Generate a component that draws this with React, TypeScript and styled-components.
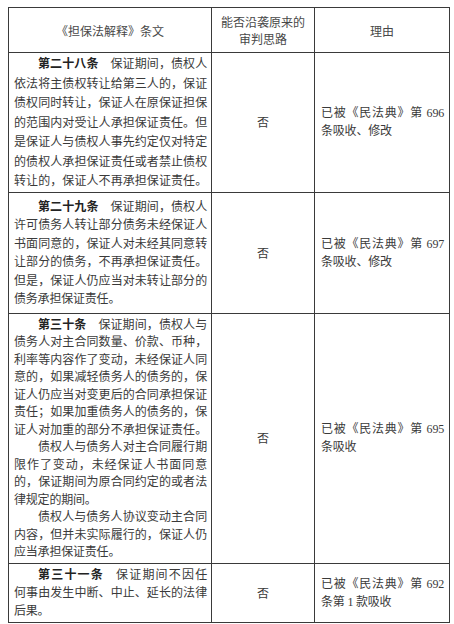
import React from 'react';
import styled, { createGlobalStyle } from 'styled-components';

type Line = {
    text: string;
    title?: string;
    indent?: boolean;
    last?: boolean;
};

type Row = {
    height: number;
    lineHeight: number;
    lines: Line[];
    reason: string[];
};

const rows: Row[] = [
    {
        height: 138,
        lineHeight: 19.5,
        lines: [
            { title: '第二十八条', text: '保证期间，债权人', indent: true },
            { text: '依法将主债权转让给第三人的，保证' },
            { text: '债权同时转让，保证人在原保证担保' },
            { text: '的范围内对受让人承担保证责任。但' },
            { text: '是保证人与债权人事先约定仅对特定' },
            { text: '的债权人承担保证责任或者禁止债权' },
            { text: '转让的，保证人不再承担保证责任。' },
        ],
        reason: ['已被《民法典》第 696', '条吸收、修改'],
    },
    {
        height: 120,
        lineHeight: 18.5,
        lines: [
            { title: '第二十九条', text: '保证期间，债权人', indent: true },
            { text: '许可债务人转让部分债务未经保证人' },
            { text: '书面同意的，保证人对未经其同意转' },
            { text: '让部分的债务，不再承担保证责任。' },
            { text: '但是，保证人仍应当对未转让部分的' },
            { text: '债务承担保证责任。', last: true },
        ],
        reason: ['已被《民法典》第 697', '条吸收、修改'],
    },
    {
        height: 249,
        lineHeight: 17.5,
        lines: [
            { title: '第三十条', text: '保证期间，债权人与', indent: true },
            { text: '债务人对主合同数量、价款、币种，' },
            { text: '利率等内容作了变动，未经保证人同' },
            { text: '意的，如果减轻债务人的债务的，保' },
            { text: '证人仍应当对变更后的合同承担保证' },
            { text: '责任；如果加重债务人的债务的，保' },
            { text: '证人对加重的部分不承担保证责任。' },
            { text: '债权人与债务人对主合同履行期', indent: true },
            { text: '限作了变动，未经保证人书面同意' },
            { text: '的，保证期间为原合同约定的或者法' },
            { text: '律规定的期间。', last: true },
            { text: '债权人与债务人协议变动主合同', indent: true },
            { text: '内容，但并未实际履行的，保证人仍' },
            { text: '应当承担保证责任。', last: true },
        ],
        reason: ['已被《民法典》第 695', '条吸收'],
    },
    {
        height: 58,
        lineHeight: 18,
        lines: [
            { title: '第三十一条', text: '保证期间不因任', indent: true },
            { text: '何事由发生中断、中止、延长的法律' },
            { text: '后果。', last: true },
        ],
        reason: ['已被《民法典》第 692', '条第 1 款吸收'],
    },
];

const GlobalStyle = createGlobalStyle`
    html, body {
        margin: 0;
        padding: 0;
        background: #ffffff;
    }
    body {
        font-family: "Liberation Serif", "Noto Sans CJK SC", serif;
    }
`;

const Page = styled.div`
    box-sizing: border-box;
    width: 454px;
    padding: 7px 0 0 8px;
`;

const Table = styled.table`
    border-collapse: collapse;
    table-layout: fixed;
    width: 438px;
    color: #3a3a3a;
`;

const HeadCell = styled.th<{ $width: number }>`
    width: ${props => props.$width}px;
    height: 44px;
    padding: 0;
    border: 1px solid #3a3a3a;
    color: #484848;
    font-family: "Noto Sans CJK SC", sans-serif;
    font-size: 12px;
    font-weight: 400;
    line-height: 17px;
    text-align: center;
    vertical-align: middle;
`;

const ArticleCell = styled.td<{ $height: number; $lineHeight: number }>`
    height: ${props => props.$height}px;
    padding: 0 4px 0 5px;
    border: 1px solid #3a3a3a;
    font-size: 12px;
    line-height: ${props => props.$lineHeight}px;
    vertical-align: middle;
`;

const TextLine = styled.span<{ $indent?: boolean; $last?: boolean }>`
    display: block;
    letter-spacing: -0.2px;
    text-indent: ${props => (props.$indent ? '24px' : '0')};
    text-align: justify;
    text-align-last: ${props => (props.$last ? 'left' : 'justify')};
`;

const ArticleTitle = styled.span`
    margin-right: 12px;
    color: #222222;
    font-family: "Noto Sans CJK SC", sans-serif;
    font-weight: 700;
`;

const AnswerCell = styled.td`
    padding: 0;
    border: 1px solid #3a3a3a;
    font-size: 12px;
    text-align: center;
    vertical-align: middle;
`;

const ReasonCell = styled.td`
    padding: 0 5px 0 6px;
    border: 1px solid #3a3a3a;
    font-size: 12px;
    line-height: 18px;
    vertical-align: middle;
`;

export default function App() {
    return (
        <Page lang="zh-CN">
            <GlobalStyle />
            <Table>
                <thead>
                    <tr>
                        <HeadCell $width={202}>《担保法解释》条文</HeadCell>
                        <HeadCell $width={102}>
                            能否沿袭原来的
                            <br />
                            审判思路
                        </HeadCell>
                        <HeadCell $width={134}>理由</HeadCell>
                    </tr>
                </thead>
                <tbody>
                    {rows.map((row, i) => (
                        <tr key={i}>
                            <ArticleCell $height={row.height} $lineHeight={row.lineHeight}>
                                {row.lines.map((line, j) => (
                                    <TextLine key={j} $indent={line.indent} $last={line.last}>
                                        {line.title && <ArticleTitle>{line.title}</ArticleTitle>}
                                        {line.text}
                                    </TextLine>
                                ))}
                            </ArticleCell>
                            <AnswerCell>否</AnswerCell>
                            <ReasonCell>
                                <TextLine>{row.reason[0]}</TextLine>
                                <TextLine $last>{row.reason[1]}</TextLine>
                            </ReasonCell>
                        </tr>
                    ))}
                </tbody>
            </Table>
        </Page>
    );
}
